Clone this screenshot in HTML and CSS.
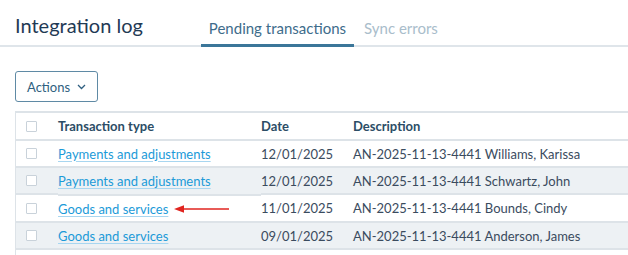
FILE: index.html
```html
<!DOCTYPE html>
<html lang="en">
<head>
    <meta charset="UTF-8">
    <title>Integration log</title>
    <link rel="stylesheet" href="styles.css">
</head>
<body>
<header class="page-header">
    <h1>Integration log</h1>
    <nav class="tabs">
        <a href="#" class="tab active">Pending transactions</a>
        <a href="#" class="tab">Sync errors</a>
    </nav>
</header>
<div class="toolbar">
    <button class="actions-btn">Actions
        <svg width="9" height="6" viewBox="0 0 9 6"><path d="M1 1l3.5 3.5L8 1" fill="none" stroke="#2f5f80" stroke-width="1.3"/></svg>
    </button>
</div>
<div class="table-wrap">
    <table class="log-table">
        <thead>
        <tr>
            <th class="col-check"><span class="checkbox"></span></th>
            <th class="col-type">Transaction type</th>
            <th class="col-date">Date</th>
            <th>Description</th>
        </tr>
        </thead>
        <tbody>
        <tr>
            <td class="col-check"><span class="checkbox"></span></td>
            <td><a href="#">Payments and adjustments</a></td>
            <td>12/01/2025</td>
            <td>AN-2025-11-13-4441 Williams, Karissa</td>
        </tr>
        <tr>
            <td class="col-check"><span class="checkbox"></span></td>
            <td><a href="#">Payments and adjustments</a></td>
            <td>12/01/2025</td>
            <td>AN-2025-11-13-4441 Schwartz, John</td>
        </tr>
        <tr>
            <td class="col-check"><span class="checkbox"></span></td>
            <td class="has-arrow"><a href="#">Goods and services</a>
                <svg class="arrow" width="56" height="10" viewBox="0 0 56 10"><path d="M8 5H55" stroke="#e0241f" stroke-width="1.6"/><path d="M0 5L10 1.2V8.8Z" fill="#e0241f"/></svg>
            </td>
            <td>11/01/2025</td>
            <td>AN-2025-11-13-4441 Bounds, Cindy</td>
        </tr>
        <tr>
            <td class="col-check"><span class="checkbox"></span></td>
            <td><a href="#">Goods and services</a></td>
            <td>09/01/2025</td>
            <td>AN-2025-11-13-4441 Anderson, James</td>
        </tr>
        </tbody>
    </table>
</div>
</body>
</html>
```

FILE: styles.css
```css
body {
    margin: 0;
    font-family: 'Lato', sans-serif;
    background-color: #ffffff;
    color: #3a4b5e;
    overflow: hidden;
}
.page-header {
    display: flex;
    align-items: flex-end;
    border-bottom: 2px solid #dfe5ea;
    height: 45px;
}
.page-header h1 {
    margin: 0 0 8px 15px;
    font-size: 20px;
    font-weight: 400;
    color: #1f3a55;
    line-height: 24px;
}
.tabs {
    display: flex;
    gap: 2px;
    margin-left: 58px;
}
.tab {
    font-size: 15px;
    text-decoration: none;
    padding: 0 8px 6px;
    color: #a9bdcb;
    border-bottom: 3px solid transparent;
    margin-bottom: -2px;
    line-height: 20px;
}
.tab.active {
    color: #3e6c8b;
    border-bottom-color: #3b7699;
}
.toolbar {
    padding: 24px 15px 9px;
}
.actions-btn {
    display: flex;
    align-items: center;
    gap: 7px;
    height: 31px;
    padding: 0 11px;
    background: #ffffff;
    border: 1px solid #5f8aa5;
    border-radius: 3px;
    font-family: inherit;
    font-size: 13px;
    color: #2f5f80;
}
.table-wrap {
    margin-left: 15px;
    width: 640px;
    height: 200px;
    border-left: 1px solid #dde3e8;
    border-top: 2px solid #dde3e8;
}
.log-table {
    width: 100%;
    border-collapse: collapse;
    font-size: 13px;
}
.log-table th {
    text-align: left;
    font-weight: 700;
    color: #2c4d66;
    height: 26px;
    padding: 0;
}
.log-table td {
    height: 25px;
    padding: 0;
    border-top: 2px solid #dde3e8;
    white-space: nowrap;
}
.log-table tbody tr:last-child td {
    border-bottom: 2px solid #dde3e8;
}
.log-table tbody tr:nth-child(even) {
    background-color: #edf1f4;
}
.col-check {
    width: 42px;
}
.col-type {
    width: 203px;
}
.col-date {
    width: 92px;
}
.checkbox {
    display: block;
    width: 9px;
    height: 9px;
    margin-left: 10px;
    border: 1px solid #c9d2da;
    border-radius: 1px;
    background: #ffffff;
}
.log-table a {
    color: #1b9ad8;
    text-decoration: underline;
    text-decoration-color: #a8d6f0;
    text-underline-offset: 2px;
}
.has-arrow {
    display: flex;
    align-items: center;
    gap: 6px;
}
```
